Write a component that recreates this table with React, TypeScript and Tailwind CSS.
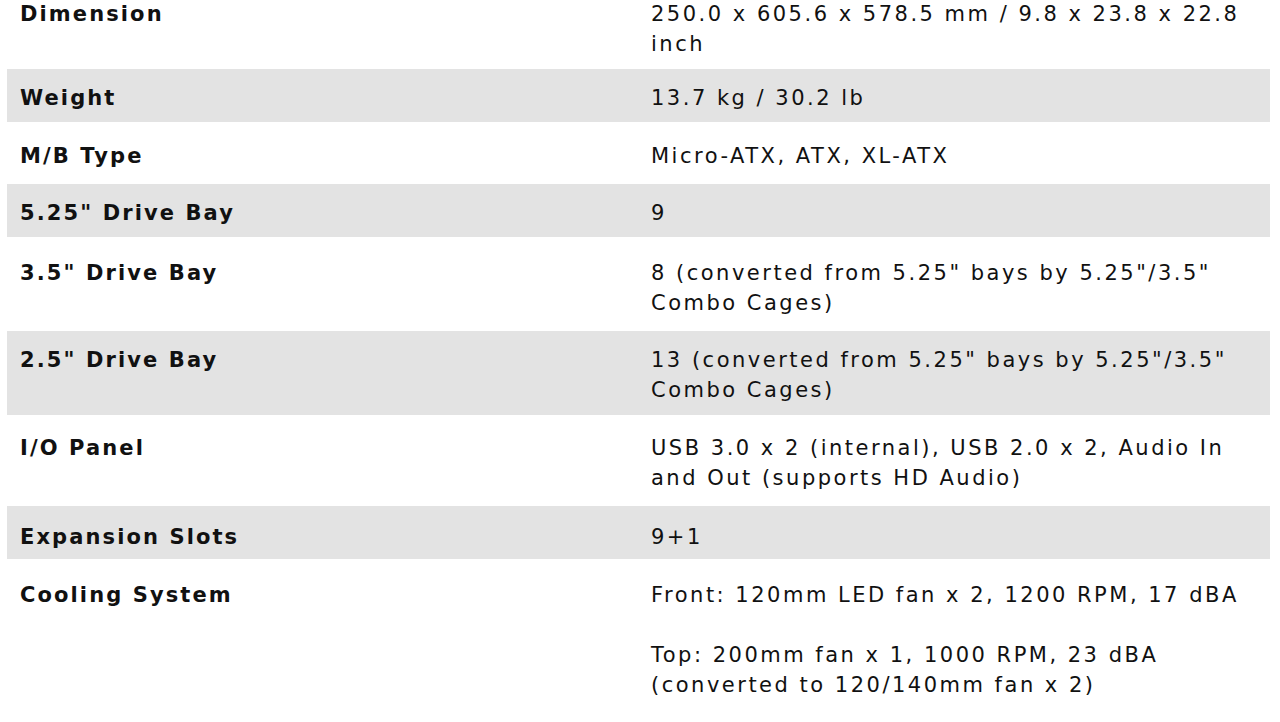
import React from 'react';

type Spec = {
  label: string;
  value: React.ReactNode;
  gray?: boolean;
  row: string;
};

const specs: Spec[] = [
  {
    label: 'Dimension',
    value: (
      <>
        250.0 x 605.6 x 578.5 mm / 9.8 x 23.8 x 22.8
        <br />
        inch
      </>
    ),
    row: 'h-[70px] pt-0',
  },
  { label: 'Weight', value: '13.7 kg / 30.2 lb', gray: true, row: 'h-[53px] pt-[14px]' },
  { label: 'M/B Type', value: 'Micro-ATX, ATX, XL-ATX', row: 'h-[62px] pt-[19px]' },
  { label: '5.25" Drive Bay', value: '9', gray: true, row: 'h-[53px] pt-[14px]' },
  {
    label: '3.5" Drive Bay',
    value: (
      <>
        8 (converted from 5.25" bays by 5.25"/3.5"
        <br />
        Combo Cages)
      </>
    ),
    row: 'h-[94px] pt-[21px]',
  },
  {
    label: '2.5" Drive Bay',
    value: (
      <>
        13 (converted from 5.25" bays by 5.25"/3.5"
        <br />
        Combo Cages)
      </>
    ),
    gray: true,
    row: 'h-[84px] pt-[14px]',
  },
  {
    label: 'I/O Panel',
    value: (
      <>
        USB 3.0 x 2 (internal), USB 2.0 x 2, Audio In
        <br />
        and Out (supports HD Audio)
      </>
    ),
    row: 'h-[91px] pt-[18px]',
  },
  { label: 'Expansion Slots', value: '9+1', gray: true, row: 'h-[53px] pt-[16px]' },
  {
    label: 'Cooling System',
    value: (
      <>
        <p className="mb-[30px]">Front: 120mm LED fan x 2, 1200 RPM, 17 dBA</p>
        <p>
          Top: 200mm fan x 1, 1000 RPM, 23 dBA
          <br />
          (converted to 120/140mm fan x 2)
        </p>
      </>
    ),
    row: 'h-[180px] pt-[21px]',
  },
];

export default function App() {
  return (
    <div className="w-[1280px] h-[722px] overflow-hidden bg-white">
      <div
        className="mx-[7px] -mt-[1px] w-[1263px] text-[21px] leading-[30px] text-[#111]"
        style={{ fontFamily: '"DejaVu Sans", Verdana, sans-serif' }}
      >
        {specs.map((s) => (
          <div
            key={s.label}
            className={`grid grid-cols-[631px_632px] ${s.row} ${s.gray ? 'bg-[#e3e3e3]' : 'bg-white'}`}
          >
            <div className="px-[13px] font-bold tracking-[2.1px] whitespace-nowrap">{s.label}</div>
            <div className="px-[13px] tracking-[2.5px] whitespace-nowrap">{s.value}</div>
          </div>
        ))}
      </div>
    </div>
  );
}
